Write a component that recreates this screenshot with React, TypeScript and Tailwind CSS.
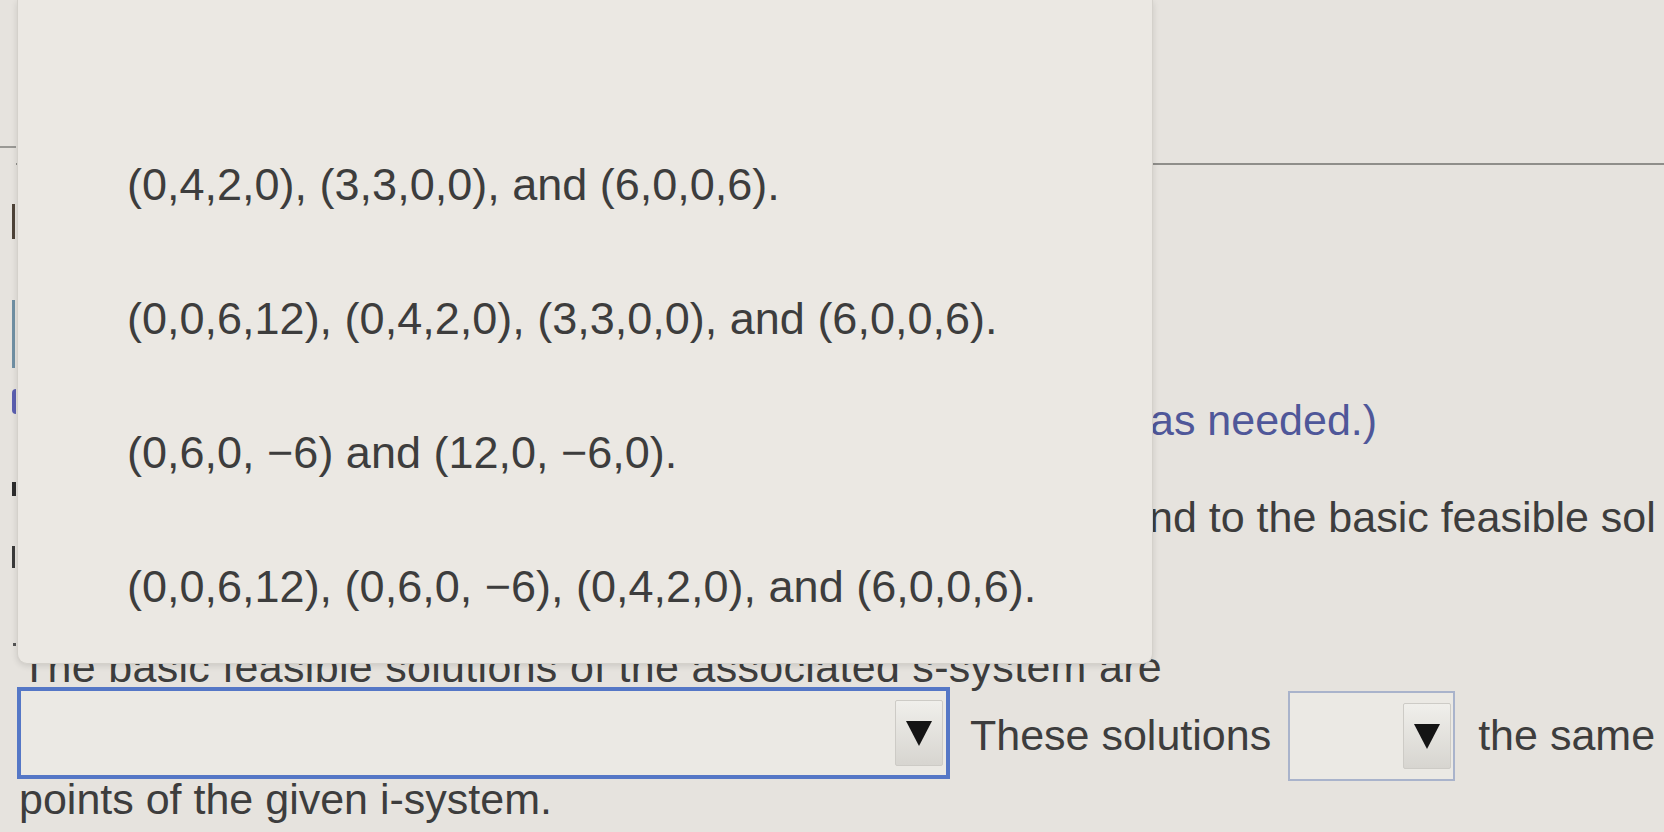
import React from "react"

const OPTIONS = [
  "(0,4,2,0), (3,3,0,0), and (6,0,0,6).",
  "(0,0,6,12), (0,4,2,0), (3,3,0,0), and (6,0,0,6).",
  "(0,6,0, \u22126) and (12,0, \u22126,0).",
  "(0,0,6,12), (0,6,0, \u22126), (0,4,2,0), and (6,0,0,6).",
]

function Arrow() {
  return (
    <svg width="28" height="27" viewBox="0 0 28 27" className="block">
      <path d="M1 1 H27 L14 26 Z" fill="#141414" />
    </svg>
  )
}

function DropButton() {
  return (
    <div className="flex h-[66px] w-[48px] shrink-0 items-center justify-center rounded-[2px] border border-[#cdcbc6] bg-linear-to-b from-[#f0efeb] to-[#d7d5d0]">
      <Arrow />
    </div>
  )
}

// clipped bits of characters peeking out left of the open menu
function Gutter() {
  return (
    <div className="flex w-[16px] shrink-0 flex-col items-end">
      <div className="mt-[146px] h-[2px] w-full bg-[#9a9995]" />
      <div className="mr-[1px] mt-[56px] h-[35px] w-[3px] bg-[#4e4338]" />
      <div className="mr-[1px] mt-[61px] h-[68px] w-[3px] bg-[#7090a4]" />
      <div className="mt-[21px] h-[25px] w-[4px] rounded-l-full bg-[#5b5fb0]" />
      <div className="mt-[68px] h-[14px] w-[4px] bg-[#2d2d2d]" />
      <div className="mr-[1px] mt-[50px] h-[22px] w-[3px] bg-[#3a3a3a]" />
      <div className="mt-[75px] h-[3px] w-[3px] bg-[#555]" />
    </div>
  )
}

export default function App() {
  return (
    <div className="relative h-[832px] w-full overflow-hidden bg-[#e6e3de] font-['Liberation_Sans',Arial,sans-serif] text-[#3d3d3d]">
      <div className="flex h-full">
        <Gutter />

        {/* page behind the open menu */}
        <div className="flex min-w-0 flex-1 flex-col pl-[3px] text-[43px] leading-none">
          <div className="h-[163px] shrink-0" />
          <div className="-ml-[3px] h-[2px] shrink-0 bg-[#8f8e8a]" />

          <div className="mt-[234px] h-[43px] shrink-0 whitespace-nowrap pl-[1131px] text-[#4f5799]">
            as needed.)
          </div>
          <div className="mt-[54px] h-[43px] shrink-0 whitespace-nowrap pl-[1130px]">
            nd to the basic feasible sol
          </div>

          <div className="mt-[107px] h-[43px] shrink-0 whitespace-nowrap pl-[2px] tracking-[0.3px]">
            The basic feasible solutions of the associated s-system are
          </div>

          <div className="-mt-[2px] flex h-[91px] shrink-0 items-start whitespace-nowrap">
            <div className="-ml-[2px] flex h-[92px] w-[933px] shrink-0 items-center justify-end border-[4px] border-[#5577c6] bg-[#ebe9e4] pr-[3px]">
              <DropButton />
            </div>
            <span className="ml-[20px] mt-[27px]">These solutions</span>
            <div className="ml-[17px] mt-[4px] flex h-[90px] w-[167px] shrink-0 items-center justify-end border-2 border-[#a9b3cb] bg-[#ebe9e4] pr-[2px]">
              <DropButton />
            </div>
            <span className="ml-[23px] mt-[27px]">the same</span>
          </div>

          <div className="h-[43px] shrink-0 whitespace-nowrap">points of the given i-system.</div>
        </div>
      </div>

      {/* open dropdown menu */}
      <div className="absolute left-[17px] top-0 flex h-[664px] w-[1136px] flex-col gap-[89px] rounded-b-[10px] border-x border-b border-[#d4d1cb] bg-[#ebe8e3] pl-[109px] pt-[162px] text-[45px] leading-none shadow-[0_2px_6px_rgba(0,0,0,0.12)]">
        {OPTIONS.map((o) => (
          <div key={o} className="h-[45px] whitespace-nowrap">
            {o}
          </div>
        ))}
      </div>
    </div>
  )
}
